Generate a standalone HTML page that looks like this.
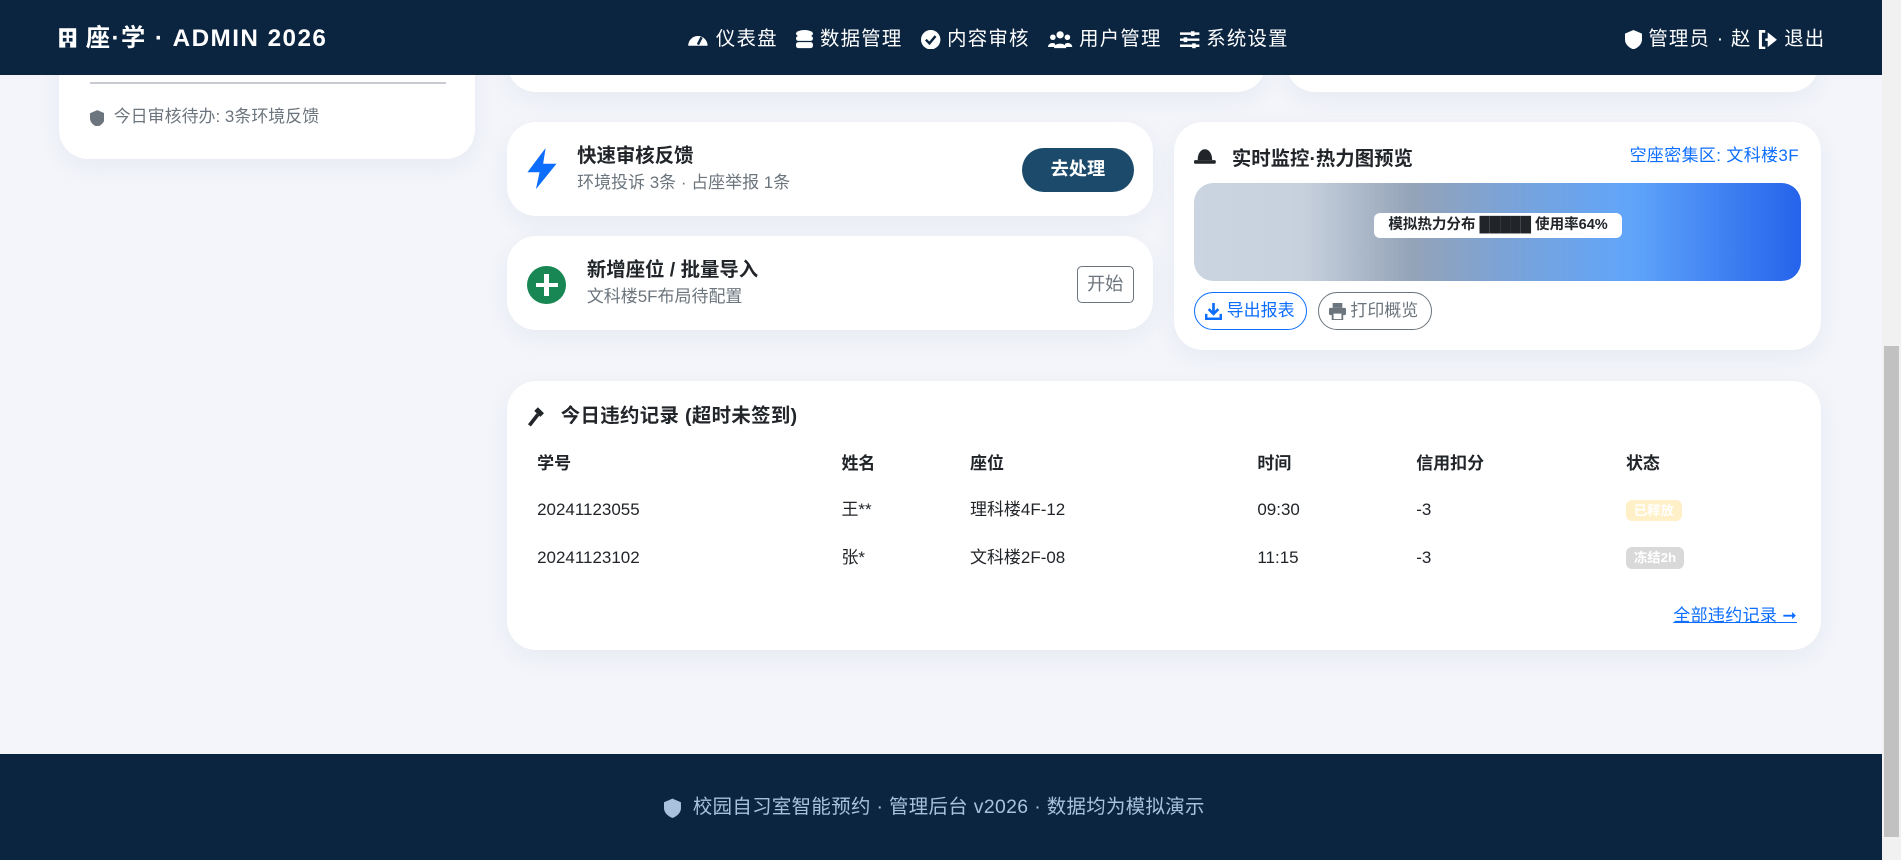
<!DOCTYPE html>
<html><head><meta charset="utf-8">
<style>
html{zoom:1.2125}
*{box-sizing:border-box;margin:0;padding:0}
body{width:1568px;height:709px;overflow:hidden;background:#f3f5fa;font-family:"Liberation Sans","Noto Sans CJK SC",sans-serif;color:#212529;position:relative}
.abs{position:absolute}
.card{background:#fff;border-radius:24px;box-shadow:0 6px 20px rgba(30,60,120,.06)}
.t{position:absolute;white-space:nowrap;line-height:20px}
.gray{color:#6c757d}
.b{font-weight:bold}
svg{display:inline-block;vertical-align:middle}
</style></head><body>

<div class="abs card" style="left:49px;top:40px;width:343px;height:91px;border-radius:0 0 24px 24px"></div>
<div class="abs" style="left:74px;top:68px;width:294px;height:1px;background:#c8ccd2"></div>
<div class="t gray" style="left:74px;top:87px;font-size:14px;">
  <svg width="12" height="14" viewBox="0 0 14 16"><path d="M7 0L14 3V8C14 12 10 15 7 16C4 15 0 12 0 8V3Z" fill="#6c757d"/></svg>&nbsp; 今日审核待办: 3条环境反馈</div>

<div class="abs card" style="left:418px;top:40px;width:626px;height:36px;border-radius:0 0 24px 24px"></div>
<div class="abs card" style="left:1061px;top:40px;width:439px;height:36px;border-radius:0 0 24px 24px"></div>

<div class="abs" style="left:0;top:0;width:1552px;height:62px;background:#0b2540;color:#fff;z-index:5">
  <div class="t b" style="left:48px;top:20px;font-size:20px;line-height:24px;letter-spacing:1.2px">
    <svg width="16" height="18" viewBox="0 0 16 18" style="margin-top:-4px"><rect x="1" y="1" width="14" height="16" fill="#fff"/><rect x="4" y="4" width="3" height="3" fill="#0b2540"/><rect x="9" y="4" width="3" height="3" fill="#0b2540"/><rect x="4" y="9" width="3" height="3" fill="#0b2540"/><rect x="9" y="9" width="3" height="3" fill="#0b2540"/><rect x="6" y="13" width="4" height="4" fill="#0b2540"/></svg> 座·学 · ADMIN 2026</div>
  <div class="t" style="left:567px;top:22px;font-size:16px;letter-spacing:1px">
    <span><svg width="18" height="16" viewBox="0 0 18 16"><path d="M1 13A8 8 0 1 1 17 13Z" fill="#fff"/><path d="M9 12L12 6" stroke="#0b2540" stroke-width="2"/></svg> 仪表盘</span>
    <span style="margin-left:10px"><svg width="14" height="16" viewBox="0 0 14 16"><ellipse cx="7" cy="3" rx="7" ry="3" fill="#fff"/><rect x="0" y="5" width="14" height="4" rx="2" fill="#fff"/><rect x="0" y="10" width="14" height="5" rx="2" fill="#fff"/></svg> 数据管理</span>
    <span style="margin-left:10px"><svg width="16" height="16" viewBox="0 0 16 16"><circle cx="8" cy="8" r="8" fill="#fff"/><path d="M4 8L7 11L12 5" stroke="#0b2540" stroke-width="2" fill="none"/></svg> 内容审核</span>
    <span style="margin-left:10px"><svg width="20" height="16" viewBox="0 0 20 16"><circle cx="10" cy="4" r="3" fill="#fff"/><circle cx="4" cy="6" r="2.3" fill="#fff"/><circle cx="16" cy="6" r="2.3" fill="#fff"/><path d="M5 15C5 10 15 10 15 15Z" fill="#fff"/><path d="M0 14C0 10 6 10 6 12V14Z M20 14C20 10 14 10 14 12V14Z" fill="#fff"/></svg> 用户管理</span>
    <span style="margin-left:10px"><svg width="16" height="16" viewBox="0 0 16 16"><path d="M0 3H16M0 8H16M0 13H16" stroke="#fff" stroke-width="2"/><rect x="9" y="1" width="3" height="4" fill="#fff"/><rect x="3" y="6" width="3" height="4" fill="#fff"/><rect x="10" y="11" width="3" height="4" fill="#fff"/></svg> 系统设置</span>
  </div>
  <div class="t" style="left:1340px;top:22px;font-size:16px;letter-spacing:1px">
    <svg width="14" height="16" viewBox="0 0 14 16"><path d="M7 0L14 3V8C14 12 10 15 7 16C4 15 0 12 0 8V3Z" fill="#fff"/></svg> 管理员 · 赵 <svg width="16" height="16" viewBox="0 0 16 16"><path d="M6 1H2V15H6" stroke="#fff" stroke-width="2.5" fill="none"/><path d="M6 8H11M9 4L14 8L9 12Z" stroke="#fff" stroke-width="2" fill="#fff"/></svg> 退出</div>
</div>

<div class="abs card" style="left:418px;top:101px;width:533px;height:77px"></div>
<svg class="abs" style="left:433px;top:122px" width="28" height="34" viewBox="0 0 28 34"><path d="M17 0L2 20H12L9 34L26 13H15Z" fill="#0d6efd"/></svg>
<div class="t b" style="left:476px;top:119px;font-size:16px;">快速审核反馈</div>
<div class="t gray" style="left:476px;top:141px;font-size:14px;">环境投诉 3条 · 占座举报 1条</div>
<div class="abs b" style="left:843px;top:122px;width:92px;height:36px;border-radius:18px;background:#1b4a6b;color:#fff;font-size:15px;text-align:center;line-height:36px">去处理</div>

<div class="abs card" style="left:418px;top:195px;width:533px;height:77px"></div>
<div class="abs" style="left:435px;top:219px;width:32px;height:32px;border-radius:50%;background:#198754"></div>
<div class="abs" style="left:449px;top:226px;width:4px;height:18px;background:#fff"></div>
<div class="abs" style="left:442px;top:233px;width:18px;height:4px;background:#fff"></div>
<div class="t b" style="left:484px;top:213px;font-size:16px;">新增座位 / 批量导入</div>
<div class="t gray" style="left:484px;top:235px;font-size:14px;">文科楼5F布局待配置</div>
<div class="abs gray" style="left:888px;top:219px;width:47px;height:31px;border:1px solid #6c757d;border-radius:4px;font-size:15px;text-align:center;line-height:29px">开始</div>

<div class="abs card" style="left:968px;top:101px;width:534px;height:188px"></div>
<svg class="abs" style="left:985px;top:122px" width="18" height="14" viewBox="0 0 18 14"><path d="M3 10C3 4 6 1 9 1S15 4 15 10Z" fill="#212529"/><rect x="0" y="10" width="18" height="3" rx="1" fill="#212529"/></svg>
<div class="t b" style="left:1016px;top:121px;font-size:16px;">实时监控·热力图预览</div>
<div class="t" style="left:1344px;top:119px;font-size:14px;color:#0d6efd;letter-spacing:0.3px">空座密集区: 文科楼3F</div>
<div class="abs" style="left:985px;top:151px;width:500px;height:81px;border-radius:16px;background:linear-gradient(90deg,#cbd5e1 0%,#c7d1dd 18%,#94a3b8 36%,#7aa3d8 52%,#60a5fa 72%,#2563eb 100%)"></div>
<div class="abs b" style="left:1133px;top:176px;width:205px;height:20px;background:#fff;border-radius:5px;font-size:12px;text-align:center;line-height:20px;color:#212529">模拟热力分布 █████ 使用率64%</div>
<div class="abs" style="left:985px;top:241px;width:93px;height:31px;border:1px solid #0d6efd;border-radius:16px;color:#0d6efd;font-size:14px;line-height:29px;padding-left:8px"><svg width="14" height="14" viewBox="0 0 14 14"><path d="M7 0V8M3 5L7 9L11 5" stroke="#0d6efd" stroke-width="2.2" fill="none"/><path d="M1 9V13H13V9" stroke="#0d6efd" stroke-width="2" fill="none"/></svg> 导出报表</div>
<div class="abs gray" style="left:1087px;top:241px;width:94px;height:31px;border:1px solid #6c757d;border-radius:16px;font-size:14px;line-height:29px;padding-left:8px"><svg width="14" height="14" viewBox="0 0 14 14"><rect x="3" y="0" width="8" height="4" fill="#6c757d"/><rect x="0" y="4" width="14" height="6" rx="1" fill="#6c757d"/><rect x="3" y="8" width="8" height="6" fill="#fff" stroke="#6c757d" stroke-width="1.5"/></svg> 打印概览</div>

<div class="abs card" style="left:418px;top:314px;width:1084px;height:222px"></div>
<div class="t b" style="left:435px;top:333px;font-size:16px;letter-spacing:0.3px"><svg width="18" height="18" viewBox="0 0 18 18"><path d="M9 1L14 6L11 9L6 4Z" fill="#212529"/><path d="M9 7L2 16" stroke="#212529" stroke-width="3"/></svg>&nbsp; 今日违约记录 (超时未签到)</div>
<div class="t b" style="left:443px;top:373px;font-size:14px;">学号</div>
<div class="t b" style="left:694px;top:373px;font-size:14px;">姓名</div>
<div class="t b" style="left:800px;top:373px;font-size:14px;">座位</div>
<div class="t b" style="left:1037px;top:373px;font-size:14px;">时间</div>
<div class="t b" style="left:1168px;top:373px;font-size:14px;">信用扣分</div>
<div class="t b" style="left:1341px;top:373px;font-size:14px;">状态</div>
<div class="t" style="left:443px;top:411px;font-size:14px;">20241123055</div>
<div class="t" style="left:694px;top:411px;font-size:14px;">王**</div>
<div class="t" style="left:800px;top:411px;font-size:14px;">理科楼4F-12</div>
<div class="t" style="left:1037px;top:411px;font-size:14px;">09:30</div>
<div class="t" style="left:1168px;top:411px;font-size:14px;">-3</div>
<div class="abs b" style="left:1341px;top:412px;width:46px;height:18px;border-radius:5px;background:#fff0c7;color:#fff;font-size:11px;text-align:center;line-height:18px">已释放</div>
<div class="t" style="left:443px;top:450px;font-size:14px;">20241123102</div>
<div class="t" style="left:694px;top:450px;font-size:14px;">张*</div>
<div class="t" style="left:800px;top:450px;font-size:14px;">文科楼2F-08</div>
<div class="t" style="left:1037px;top:450px;font-size:14px;">11:15</div>
<div class="t" style="left:1168px;top:450px;font-size:14px;">-3</div>
<div class="abs b" style="left:1341px;top:451px;width:48px;height:18px;border-radius:5px;background:#d9d9d9;color:#fff;font-size:11px;text-align:center;line-height:18px">冻结2h</div>
<div class="t" style="left:1380px;top:498px;font-size:14px;color:#0d6efd;text-decoration:underline;letter-spacing:0.3px">全部违约记录 ➞</div>

<div class="abs" style="left:0;top:622px;width:1552px;height:87px;background:#0b2540"></div>
<div class="t" style="left:548px;top:656px;font-size:16px;color:#a9c1da;letter-spacing:0.3px">
  <svg width="14" height="17" viewBox="0 0 14 16"><path d="M7 0L14 3V8C14 12 10 15 7 16C4 15 0 12 0 8V3Z" fill="#a9c1da"/></svg>&nbsp; 校园自习室智能预约 · 管理后台 v2026 · 数据均为模拟演示</div>

<div class="abs" style="left:1552px;top:0;width:16px;height:709px;background:#f1f1f1"></div>
<div class="abs" style="left:1554px;top:285px;width:12px;height:405px;background:#c1c1c1"></div>
</body></html>
